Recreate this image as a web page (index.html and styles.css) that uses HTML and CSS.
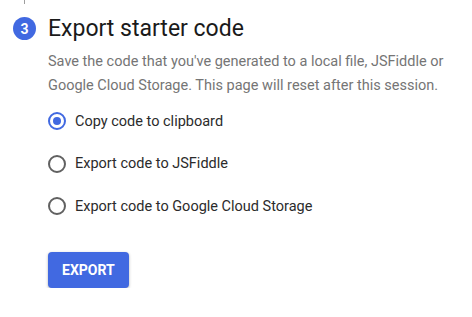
FILE: index.html
```html
<!doctype html>
<html lang="en">
<head>
  <meta charset="UTF-8">
  <meta name="viewport" content="width=device-width, initial-scale=1.0">
  <title>Export starter code</title>
  <link rel="stylesheet" href="styles.css">
</head>
<body>
  <div class="step">
    <div class="rail">
      <span class="rail-line"></span>
      <span class="badge">3</span>
    </div>
    <div class="content">
      <h2 class="title">Export starter code</h2>
      <p class="desc">Save the code that you've generated to a local file, JSFiddle or Google Cloud Storage. This page will reset after this session.</p>
      <div class="options">
        <label class="option"><input type="radio" name="export" checked> Copy code to clipboard</label>
        <label class="option"><input type="radio" name="export"> Export code to JSFiddle</label>
        <label class="option"><input type="radio" name="export"> Export code to Google Cloud Storage</label>
      </div>
      <button class="export-btn">EXPORT</button>
    </div>
  </div>
</body>
</html>
```

FILE: styles.css
```css
body {
    margin: 0;
    font-family: Roboto, "Liberation Sans", sans-serif;
    background: #ffffff;
    color: #202124;
}
.step {
    display: grid;
    grid-template-columns: 48px 1fr;
}
.rail {
    display: flex;
    flex-direction: column;
    align-items: center;
    padding-left: 1px;
}
.rail-line {
    width: 1px;
    height: 4px;
    background: #9e9e9e;
}
.badge {
    margin-top: 13px;
    width: 23px;
    height: 23px;
    border-radius: 50%;
    background: #4169e1;
    color: #ffffff;
    font-size: 14px;
    font-weight: 700;
    display: flex;
    align-items: center;
    justify-content: center;
}
.content {
    padding-right: 20px;
}
.title {
    margin: 15px 0 0;
    font-size: 23px;
    font-weight: 400;
    line-height: 28px;
    color: #1a1a1a;
}
.desc {
    margin: 7px 0 0;
    font-size: 14.5px;
    line-height: 24px;
    color: #757575;
}
.options {
    margin-top: 2px;
    display: flex;
    flex-direction: column;
}
.option {
    height: 42.5px;
    display: flex;
    align-items: center;
    gap: 9px;
    font-size: 14.5px;
    color: #2b2b2b;
}
.option input {
    appearance: none;
    margin: 0;
    width: 18px;
    height: 18px;
    border: 2px solid #616161;
    border-radius: 50%;
    display: grid;
    place-content: center;
}
.option input:checked {
    border-color: #4169e1;
}
.option input:checked::before {
    content: "";
    width: 8px;
    height: 8px;
    border-radius: 50%;
    background: #4169e1;
}
.export-btn {
    margin-top: 24px;
    height: 36px;
    padding: 0 14px;
    border: none;
    border-radius: 4px;
    background: #4169e1;
    color: #ffffff;
    font-family: Roboto, "Liberation Sans", sans-serif;
    font-size: 14px;
    font-weight: 700;
    box-shadow: 0 1px 3px rgba(0, 0, 0, 0.3);
}
```
